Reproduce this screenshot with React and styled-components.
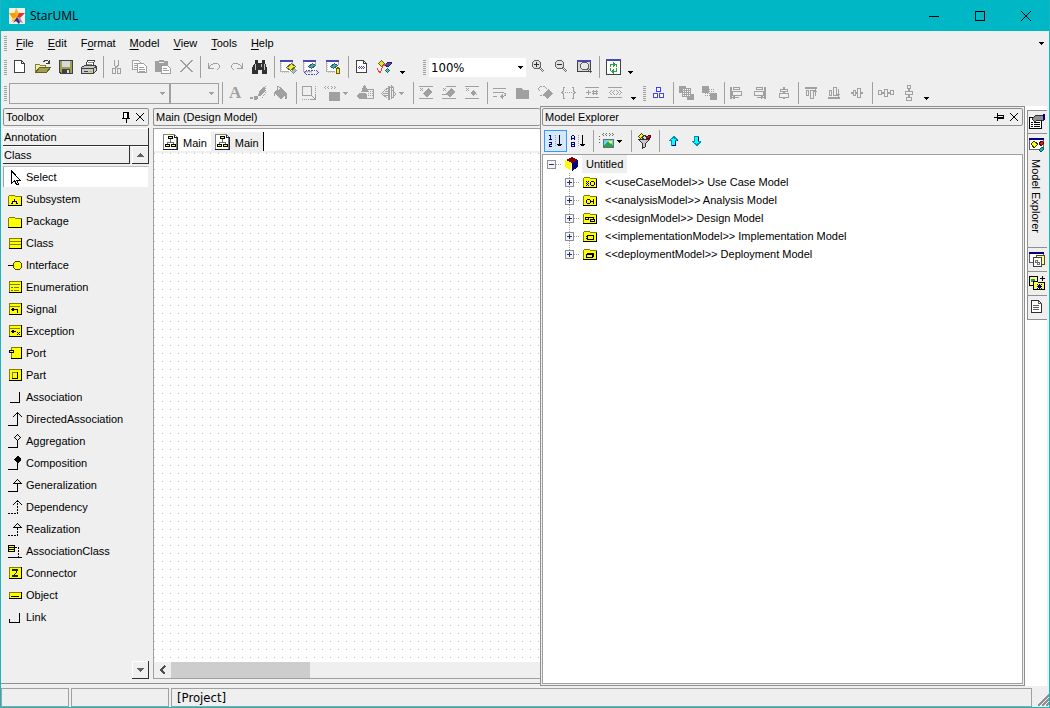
import React from 'react'
import styled, { createGlobalStyle, css } from 'styled-components'

const GREY = '#a0a0a0'
const DARK = '#404040'
const YELLOW = '#ffff00'
const NAVY = '#4848b0'

const GlobalStyle = createGlobalStyle`
  * { box-sizing: border-box; }
  body { margin: 0; }
  body, button, select {
    font-family: 'Liberation Sans', Arial, sans-serif;
    font-size: 11px;
    color: #000;
  }
  button {
    border: 0;
    padding: 0;
    background: none;
    text-align: left;
  }
  ul { list-style: none; margin: 0; padding: 0; }
`

/* ---------- icons: each entry is a list of [path, stroke, fill, dash] ---------- */

// single pixels, for thin diagonals
const dots = points => points.map(([x, y]) => `M${x} ${y}h1v1h-1z`).join('')

const folder = ['M.5 13V4.5l1-1h5l1 1H13V13z', '#808000', YELLOW]
const folderEdge = ['M0 13.5h13.5V5', '#000']
const windowBack = [
  ['M1 1h13v11H1z', null, '#fff'],
  ['M2 4v9M3 13h8', '#c8c8c8', null, '1 1'],
  ['M1 1.5h13M1 2.5h13', NAVY],
  ['M1.5 3v10M1 12.5h9M13.5 3v3', '#b0b0b0']
]
const box = [
  ['M1 1h12v11H1z', null, YELLOW],
  ['M1.5 12V1.5H13', '#808000'],
  ['M1 12.5h12.5V1', '#000']
]
const cornerLine = ['M0 13.5h9.5V1', '#000']
const dashedCorner = ['M0 13.5h9.5V1', '#000', null, '2 1']
const shortCorner = ['M0 13.5h9.5V6', '#000']
const openHead = [dots([[9, 0], [8, 1], [10, 1], [7, 2], [11, 2], [6, 3], [12, 3], [5, 4], [13, 4]]), null, '#000']
const closedHead = [
  ['M9 1h1l4 4H5z', null, '#efefef'],
  [dots([[9, 1], [8, 2], [10, 2], [7, 3], [11, 3], [6, 4], [12, 4]]), null, '#000'],
  ['M5 5.5h9', '#000']
]
const diamondPoints = [[9, 0], [8, 1], [10, 1], [7, 2], [11, 2], [6, 3], [12, 3], [7, 4], [11, 4], [8, 5], [10, 5], [9, 6]]

const icons = {
  newDoc: [['M3.5 1.5h7l3 3v9h-10z', DARK, '#fff'], ['M10.5 1.5v3h3', DARK]],
  open: [
    ['M1.5 12.5v-7h4l1 1h5v6z', '#808040', '#f0f0a0'],
    ['M1.5 13.5l4-5h11l-4 5z', '#606020', '#a0a050'],
    ['M9.5 3.5l1-2h3l2 3M15.5 1v3.5H12', DARK]
  ],
  save: [
    ['M2.5 1.5h13v13H4l-1.5-1.5z', DARK, '#a0a050'],
    ['M5 2h8v6H5z', null, '#d8d8d8'],
    ['M5 10h8v4H5z', null, DARK],
    ['M10 11h2v3h-2z', null, '#ddd']
  ],
  print: [
    ['M5.5 7.5l2-6h7l-2 6z', DARK, '#fff'],
    ['M8 3.5h5M7 5.5h5', '#909090'],
    ['M1.5 8.5l3-2h11l1 2v3l-3 3h-12z', DARK, '#c8c8c8'],
    ['M1.5 9.5h12v5M13.5 9.5l3-2', DARK],
    ['M4 12.5h4', DARK],
    ['M9 12.5h3', '#c0c000']
  ],
  cut: [['M6.5 1v5l2 3M10.5 1v5l-3 3M7.5 9l-3 1v4h3V9M9.5 9l3 1v4h-3V9', GREY]],
  copy: [
    ['M1.5 1.5h6l2 2v7h-8z', GREY, '#fff'],
    ['M3 4.5h4M3 6.5h4M3 8.5h4', GREY],
    ['M6.5 4.5h6l3 3v6h-9z', GREY, '#fff'],
    ['M8 8.5h5M8 10.5h6M8 12.5h6', GREY]
  ],
  paste: [
    ['M1 2h4V1h5v1h4v11H1z', null, GREY],
    ['M5 3.5h5', '#f0f0f0'],
    ['M7.5 6.5h6l3 3v5h-9z', GREY, '#fff'],
    ['M9 9.5h4M9 11.5h6', GREY]
  ],
  remove: [['M3 1l12 12M4 1l12 12M15 1L3 13M16 1L4 13', GREY]],
  undo: [['M3.5 4v5.5H9M3.5 9.5l2-3 3-2h4l2 2v2l-3 3', GREY]],
  redo: [['M14.5 4v5.5H9M14.5 9.5l-2-3-3-2h-4l-2 2v2l3 3', GREY]],
  find: [
    ['M4 1h3v3h4V1h3v3l2 5v6h-5v-4H7v4H1V9l3-5z', null, '#303030'],
    ['M4.5 5v6M10.5 5v3M13.5 5v6', '#c0c0c0']
  ],
  diagramEdit: [
    ...windowBack,
    ['M7.5 8.5l5-4 4 3-5 4z', '#606020', '#e8e840'],
    ['M12.5 12.5l3-3 2 2-3 3z', '#909090', '#90d0b0']
  ],
  diagramLink: [
    ...windowBack,
    ['M6.5 7.5l4-3 3 2-4 3z', '#306060', '#40b0b0'],
    [dots([[4, 11], [3, 12], [2, 13], [3, 14], [4, 15], [14, 11], [15, 12], [16, 13], [15, 14], [14, 15]]), null, NAVY],
    ['M6 11.5h7M6 15.5h7', NAVY, null, '2 1']
  ],
  diagramTag: [
    ...windowBack,
    ['M5.5 7.5l4-3 3 2-4 3z', '#306060', '#40b0b0'],
    ['M11.5 14.5v-4l1-2h1l1 2v4z', '#606000', '#f0f040']
  ],
  codeDoc: [
    ['M3.5 1.5h7l3 3v9h-10z', DARK, '#fff'],
    ['M10.5 1.5v3h3', DARK],
    [dots([[5, 8], [6, 7], [6, 9], [7, 8], [8, 7], [8, 9], [9, 8], [10, 7], [10, 9], [11, 8]]), null, NAVY]
  ],
  verify: [
    ['M2.5 4.5l3-3 3 3-3 3z', '#606020', '#e8e020'],
    ['M9 6l3-3h3v2l-3 3z', '#202060', '#4848d0'],
    ['M9.5 11.5l2-2 2 2-2 2z', '#206060', '#40c0c0'],
    ['M1 9l3 5 3-7 3-2', '#f04040']
  ],
  zoomIn: [
    ['M4.5 1.5h4l2 2v4l-2 2h-4l-2-2v-4z', '#606060', '#e0e0e0'],
    ['M4 5.5h5M6.5 3v5', '#303030'],
    ['M9.5 9.5l4 4M10.5 8.5l4 4', '#707070']
  ],
  zoomOut: [
    ['M4.5 1.5h4l2 2v4l-2 2h-4l-2-2v-4z', '#606060', '#e0e0e0'],
    ['M4 5.5h5', '#303030'],
    ['M9.5 9.5l4 4M10.5 8.5l4 4', '#707070']
  ],
  zoomFit: [
    ['M1.5 2.5h13v10h-13z', DARK, '#d8d8d8'],
    ['M1 1.5h14M1 2.5h14', NAVY],
    ['M6.5 3.5h4l2 2v3l-2 2h-4l-2-2v-3z', '#606060', '#e8e8e8'],
    ['M11 10l4 4M12 9l4 4', '#606060']
  ],
  refresh: [
    ['M2.5 1.5h14v14h-14z', DARK, '#fff'],
    ['M2 .5h15M2 1.5h15', NAVY],
    ['M6.5 8V5.5H10M9 3.5l2 2-2 2M12.5 9v3.5H9M10 10.5l-2 2 2 2', '#30a040'],
    ['M12.5 5v3M6.5 9v3', '#30a040']
  ],
  brush: [
    ['M13 2h2v4l-4 5H8l1-4z', null, GREY],
    ['M0 12h3v2H0zM4 11h4v2l-2 2H4z', null, GREY],
    ['M15.5 1v7l-4 6', GREY, null, '1 1']
  ],
  fill: [['M1 8l7-5 6 5-6 6z', null, GREY], ['M1.5 11V8l3-3V1.5l3 1V8', GREY], ['M14 8v6h-2V9z', null, GREY]],
  resize: [
    ['M1.5 1.5h9v9h-9z', GREY],
    ['M14.5 1v13M1 14.5h13', GREY, null, '1 1'],
    ['M10 10l4 4M14.5 10v4.5H10', GREY]
  ],
  stereotype: [
    [dots([[1, 1], [0, 2], [1, 3], [4, 1], [3, 2], [4, 3], [7, 1], [8, 2], [7, 3], [10, 1], [11, 2], [10, 3]]), null, GREY],
    ['M5 7h11v9H5z', null, GREY]
  ],
  shapes: [
    ['M7 0h1l4 7H4z', null, GREY],
    ['M0 10l2-2h6l2 2v2l-2 2H2l-2-2z', null, GREY],
    ['M10 4.5h6.5V13H9', GREY],
    ['M11 6.5h5M11 8.5h5M11 10.5h5', GREY, null, '1 1']
  ],
  flip: [
    ['M7.5 3L1.5 8.5l6 5', GREY],
    ['M3 8.5h5M5 6.5h3M5 10.5h3', GREY],
    ['M8 1h2v14H8z', null, GREY],
    ['M10 2.5h3v10M11 4l5 5-5 5z', GREY],
    ['M11 0l2 2-2 3z', null, GREY]
  ],
  hideAttr: [
    ['M1 1.5h14M1 13.5h14', GREY],
    [dots([[2, 3], [4, 3], [3, 4], [2, 5], [4, 5]]), null, GREY],
    ['M10 3l4 4-5 5-4-3z', null, GREY]
  ],
  hideOps: [
    ['M5 1.5h10M1 9.5h6M1 13.5h14', GREY],
    [dots([[2, 3], [4, 3], [3, 4], [2, 5], [4, 5]]), null, GREY],
    ['M10 3l4 4-5 5-4-3z', null, GREY]
  ],
  hideLits: [
    ['M1 1.5h14M1 13.5h14', GREY],
    [dots([[2, 3], [4, 3], [3, 4], [2, 5], [4, 5]]), null, GREY],
    ['M9 5l3 3-3 3-3-3z', null, GREY],
    ['M12 9h1v1h-1z', null, GREY]
  ],
  wrap: [['M1 3.5h13M1 7.5h10l2 1v2l-2 1H9M1 11.5h4M11 9.5l-2 2 2 2', GREY]],
  solidFolder: [['M1 3h6l1 2h6v9H1z', null, GREY]],
  stereoNs: [
    [dots([[1, 2], [0, 3], [0, 4], [1, 5], [7, 2], [8, 3]]), null, GREY],
    ['M2 1.5h6M2 10.5h4', GREY, null, '2 1'],
    ['M10 4l5 4-6 6-4-4z', null, GREY]
  ],
  braces: [['M4 2H2.5v4L1 7.5 2.5 9v4H4M11 2h1.5v4L14 7.5 12.5 9v4H11', GREY], ['M4 7.5h8', GREY, null, '1 1']],
  plusHash: [['M1 2.5h14M1 12.5h14M2 7.5h5M4.5 5v5M8 6.5h6M8 8.5h6M9.5 5v5M12.5 5v5', GREY]],
  guillemets: [
    ['M1 2.5h14M1 12.5h14', GREY],
    [dots([[4, 5], [3, 6], [2, 7], [3, 8], [4, 9], [7, 5], [6, 6], [5, 7], [6, 8], [7, 9], [9, 5], [10, 6], [11, 7], [10, 8], [9, 9], [12, 5], [13, 6], [14, 7], [13, 8], [12, 9]]), null, GREY]
  ],
  layout: [['M6.5 2.5h4v4h-4zM3.5 8.5h4v4h-4zM9.5 8.5h4v4h-4z', '#4040ff', '#fff']],
  toFront: [['M1 1h7v7H1zM9 9h7v6H9z', null, GREY], ['M4 3h9v9H4z', null, GREY], ['M5 4.5h7M5 6.5h7M5 8.5h7M5 10.5h7', '#fff', null, '1 1']],
  toBack: [['M1 1h7v7H1zM9 8h7v7H9z', null, GREY], ['M4 4.5h9M4 6.5h9M4 8.5h9M4 10.5h9', GREY, null, '1 1']],
  alignLeft: [['M1 2h2v12H1z', null, GREY], ['M4.5 2.5h6v2h-6zM3.5 6.5h9v4h-9zM4 12.5h6M6 11l-2 1.5L6 14', GREY]],
  alignRight: [['M12 2h2v12h-2z', null, GREY], ['M4.5 2.5h6v2h-6zM2.5 6.5h9v4h-9zM5 12.5h6M9 11l2 1.5L9 14', GREY]],
  alignCenter: [['M8 2h2v12H8z', null, GREY], ['M5.5 4.5h7v2h-7zM4.5 8.5h9v4h-9z', GREY, '#f0f0f0']],
  alignTop: [['M2 2h12v2H2z', null, GREY], ['M3.5 5.5h2v5h-2zM7.5 5.5h3v8h-3zM12.5 5v6M11 7l1.5-2L14 7', GREY]],
  alignBottom: [['M2 12h12v2H2z', null, GREY], ['M3.5 5.5h2v5h-2zM7.5 2.5h3v8h-3zM12.5 4v7M11 9l1.5 2L14 9', GREY]],
  alignMiddle: [['M2 7h12v2H2z', null, GREY], ['M4.5 5.5h2v5h-2zM8.5 3.5h3v9h-3z', GREY, '#f0f0f0']],
  spaceH: [['M1 7h16v2H1z', null, GREY], ['M1.5 5.5h3v4h-3zM7.5 4.5h3v7h-3zM13.5 5.5h3v4h-3z', GREY, '#f0f0f0']],
  spaceV: [['M8 0h2v16H8z', null, GREY], ['M7.5 .5h3v3h-3zM5.5 6.5h7v3h-7zM6.5 12.5h5v3h-5z', GREY, '#f0f0f0']],

  select: [['M3.5 1v12.5l3-3 2 4h2l-1.5-4h3.5z', '#000', '#fff']],
  subsystem: [folder, folderEdge, ['M6.5 7v2M4.5 11.5V9.5h4v2M3 11.5h2M8 11.5h2', '#000']],
  package: [folder, folderEdge],
  class: [['M1 2h12v10H1z', null, YELLOW], ['M1.5 12V2.5H13M2 5.5h11M2 8.5h11', '#808000'], ['M1 12.5h12.5V2', '#000']],
  interface: [['M0 7.5h5', '#000'], ['M7.5 3.5h4l2 2v4l-2 2h-4l-2-2v-4z', '#404000', YELLOW]],
  enumeration: [...box, ['M2 4.5h10', '#808000'], ['M3 7h2v1H3zM3 10h2v1H3z', null, '#008080'], ['M6 7.5h5M6 10.5h5', '#808000']],
  signal: [...box, ['M2 4.5h10', '#808000'], ['M3 7.5h6v3M5.5 6L4 7.5 5.5 9', '#000']],
  exception: [...box, ['M2 4.5h10', '#808000'], ['M3 7.5h5M5.5 6L4 7.5 5.5 9', '#000'], [dots([[9, 8], [11, 8], [10, 9], [9, 10], [11, 10]]), null, '#000']],
  port: [['M3 1h10v11H3z', null, YELLOW], ['M3.5 12V1.5H13', '#808000'], ['M3 12.5h10.5V1', '#000'], ['M1.5 4.5h4v2h-4z', '#000', YELLOW]],
  part: [...box, ['M4.5 10V4.5H10', '#808000'], ['M4 10.5h5.5V4', '#000']],
  association: [['M2 12.5h9.5V2', '#000']],
  directed: [cornerLine, openHead],
  aggregation: [shortCorner, [dots(diamondPoints), null, '#000']],
  composition: [shortCorner, ['M9 0h1l3 3v1l-3 3H9L6 4V3z', null, '#000']],
  generalization: [cornerLine, ...closedHead],
  dependency: [dashedCorner, openHead],
  realization: [dashedCorner, ...closedHead],
  associationClass: [['M0 1h6v6H0z', null, YELLOW], ['M.5 1.5h6v6h-6zM1 3.5h5M1 5.5h5', '#000'], ['M7 3.5h3.5V13', '#000', null, '2 1'], ['M0 13.5h14', '#000']],
  connector: [...box, ['M4.5 3.5h5v1h-5zM4.5 9.5h5v1h-5z', '#202000'], [dots([[8, 5], [8, 6], [7, 7], [6, 8]]), null, '#202000']],
  object: [['M1 4h12v6H1z', null, YELLOW], ['M1.5 10V4.5H13', '#808000'], ['M1 10.5h12.5V4M3 8.5h8', '#000']],
  link: [['M1.5 9v3.5h10V3', '#000']],

  diagram: [
    ['M1.5 .5h11l2 2v13h-13z', '#808080', '#fff'],
    ['M12.5 .5v3h3v12H1', '#202020'],
    ['M6.5 2.5h4v2h-4zM3.5 10.5h4v2h-4zM9.5 10.5h4v2h-4z', '#000', YELLOW],
    ['M8.5 5v3M5.5 10V8.5h6V10', '#707070']
  ],
  sortOrder: [
    ['M2 2.5h2M3.5 2v5M2 6.5h3M2 9.5h2.5v2H2.5v2H5', '#000080'],
    ['M8.5 2v12', GREY, null, '1 1'],
    ['M12.5 2v11M10 11.5h5M11 12.5h3', '#000']
  ],
  sortName: [
    ['M1.5 7V3.5l1-1h1l1 1V7M2 5.5h3M1.5 9.5h3v4h-3zM2 11.5h3', '#000080'],
    ['M8.5 2v12', GREY, null, '1 1'],
    ['M12.5 2v11M10 11.5h5M11 12.5h3', '#000']
  ],
  viewStereo: [
    ['M1.5 3v8', '#606060', null, '1 2'],
    [dots([[5, 0], [4, 1], [5, 2], [8, 0], [7, 1], [8, 2], [11, 0], [12, 1], [11, 2], [14, 0], [15, 1], [14, 2]]), null, '#707070'],
    ['M5.5 6.5h10v8h-10z', '#607080', '#60d8e8'],
    ['M6 12l4-3 5 3v2H6z', null, '#30a050'],
    ['M11 8h3v2h-3z', null, YELLOW]
  ],
  filter: [
    ['M2.5 3.5l3-3 2 2-3 3z', '#404000', YELLOW],
    ['M10 5l3-3 2 1-2 3z', '#600000', '#d02020'],
    ['M2.5 6.5h11l-4 4v3l-3 2v-5z', '#303030', '#c8c8c8'],
    ['M6 5l3-3 2 3-2 2z', '#303030', '#ddd']
  ],
  up: [
    ['M9 3h1l4 4v1h-2v5H7V8H5V7z', null, '#0090b0'],
    ['M9 5h1v1h2v1h-1v5H8V7H7V6h2z', null, '#00ffff'],
    ['M11.5 8v5M8 12.5h4M13.5 7v1', '#000080']
  ],
  down: [
    ['M7 3h5v5h2v1l-4 4H9L5 9V8h2z', null, '#0090b0'],
    ['M8 4h3v5h1v1h-2v1H9v-1H7V9h1z', null, '#00ffff'],
    ['M11.5 4v4', '#000080']
  ],
  cube: [
    ['M7 1l6 3-6 3-6-3z', null, '#800000'],
    ['M0 4l7 3v8l-7-4z', null, YELLOW],
    ['M13 4L7 7v8l6-4z', null, '#000080'],
    ['M6.5 8v7', '#fff']
  ],
  useCase: [folder, folderEdge, [dots([[3, 7], [5, 7], [4, 8], [3, 9], [5, 9], [4, 10], [3, 11], [5, 11]]), null, '#000'], ['M7.5 8.5l1-1h2l1 1v2l-1 1h-2l-1-1z', '#000']],
  analysis: [folder, folderEdge, ['M3.5 8.5l1-1h2l1 1v2l-1 1h-2l-1-1zM7.5 9.5h3M10.5 7v5', '#000']],
  design: [folder, folderEdge, ['M2.5 7.5h3v2h-3zM7.5 9.5h4v2h-4zM6 7.5h4V9', '#000']],
  implementation: [folder, folderEdge, ['M4.5 7.5h6v4h-6zM3 8.5h2M3 10.5h2', '#000']],
  deployment: [folder, folderEdge, ['M3.5 8.5h6v3h-6zM4 7.5h6.5V11', '#000']],

  properties: [
    ['M.5 3.5h12v11h-12z', '#000', '#fff'],
    ['M5 8.5h6M5 10.5h6M5 12.5h6M2 8.5h2M2 10.5h2M2 12.5h2', '#000'],
    ['M3 5l4-4h7v5H8L6 8z', '#303030', '#909090'],
    ['M14 0h2v6h-2z', null, '#000080']
  ],
  explorer: [
    ['M.5 1.5h14v11h-14z', '#606060', '#fff'],
    ['M0 1h15v2H0z', null, '#000080'],
    ['M2 7l3-3 4 3-4 4z', '#303000', YELLOW],
    ['M10 6l3-2 2 2-3 3z', '#600000', '#d02020'],
    ['M10 13l3-3 2 2-3 3z', '#006060', '#20b0b0']
  ],
  attachments: [
    ['M.5 1.5h14v10h-14z', '#606060', '#fff'],
    ['M0 1h15v2H0z', null, '#000080'],
    ['M7.5 4.5h8v9h-8z', '#505020', '#ffffa0'],
    ['M4.5 6.5h8v9h-8z', '#404040', '#fff'],
    ['M6.5 9.5h2v2h-2zM8.5 11.5h2v2h-2z', '#707070']
  ],
  profile: [
    ['M.5 1.5h8v9h-8z', '#000', '#ffff80'],
    ['M2 4h4v3H2z', null, '#2090a0'],
    ['M11 3.5h5M13.5 1v5', '#000'],
    ['M4.5 6.5h4l1 1h6v7h-11z', '#000', '#ffff40'],
    [dots([[8, 9], [12, 9], [9, 10], [11, 10], [9, 12], [11, 12], [8, 13], [12, 13]]), null, '#000080'],
    ['M8 11.5h5M10.5 9v5', '#000080']
  ],
  document: [['M2.5 1.5h7l3 3v9h-10z', '#303030', '#fff'], ['M9.5 1.5v3h3M4 6.5h6M4 8.5h6M4 10.5h6', '#606060']],

  pin: [['M4.5 2.5h5v6h-5zM3 8.5h8M7.5 9v4M8.5 3v5', '#000', '#fff']],
  pinSide: [['M4.5 5.5h6v3h-6zM4.5 3v8M1 7.5h4M5 7.5h6', '#000']],
  close: [['M3 3l8 8M11 3l-8 8', '#000']]
}

const Svg = styled.svg`
  flex: none;
  display: block;
  overflow: visible;
  shape-rendering: crispEdges;
`

function Icon ({ name, size = 16 }) {
  return (
    <Svg width={size} height={size} viewBox={`0 0 ${size} ${size}`} aria-hidden='true'>
      {icons[name].map(([d, stroke, fill, dash], i) => (
        <path key={i} d={d} stroke={stroke || 'none'} fill={fill || 'none'} strokeDasharray={dash} />
      ))}
    </Svg>
  )
}

function Triangle ({ color = '#000', up }) {
  return (
    <Svg width='7' height='4' viewBox='0 0 7 4' aria-hidden='true'>
      <path d={up ? 'M0 4h7L3.5 0z' : 'M0 0h7L3.5 4z'} fill={color} />
    </Svg>
  )
}

function Caret ({ color = '#000' }) {
  return (
    <Svg width='5' height='3' viewBox='0 0 5 3' aria-hidden='true'>
      <path d='M0 0h5v1H4v1H3v1H2V2H1V1H0z' fill={color} />
    </Svg>
  )
}

/* ---------- window frame ---------- */

const Window = styled.div`
  display: flex;
  flex-direction: column;
  height: 100vh;
  overflow: hidden;
  background: #efefef;
  border: 1px solid #18b4c0;
  border-top: 0;
  line-height: 14px;
  cursor: default;
`

const TitleBar = styled.header`
  flex: none;
  display: flex;
  align-items: center;
  height: 31px;
  padding-left: 8px;
  background: #00b7c6;
`

const AppName = styled.h1`
  flex: 1;
  margin: 0 0 0 5px;
  font: 12px/16px 'Open Sans', 'Noto Sans', sans-serif;
`

const CaptionButton = styled.button`
  display: flex;
  align-items: center;
  justify-content: center;
  width: 46px;
  height: 30px;
`

const MenuBar = styled.nav`
  flex: none;
  display: flex;
  align-items: center;
  height: 23px;
  padding: 1px 5px 0 0;
`

const MenuButton = styled.button`
  height: 20px;
  padding: 0 7px;
  u { text-underline-offset: 2px; }
`

const MenuSpace = styled.div`
  flex: 1;
`

const Grip = styled.span`
  flex: none;
  width: 3px;
  height: 15px;
  margin: 0 1px 0 ${p => p.$gap || 3}px;
  background: repeating-linear-gradient(#a0a0a0 0 1px, transparent 1px 2px);
  & + ${MenuButton} { margin-left: 1px; }
`

const ToolRow = styled.div`
  flex: none;
  display: flex;
  align-items: center;
  height: 26px;
`

const ToolButton = styled.button`
  flex: none;
  display: flex;
  align-items: center;
  width: ${p => (p.$menu ? 33 : 23)}px;
  height: 22px;
  padding-left: 3px;
  svg + svg { margin-left: 3px; }
  ${p => p.$pressed && css`
    background: #d4e8fa;
    outline: 1px solid #3399ff;
    outline-offset: -1px;
  `}
`

const More = styled.button`
  flex: none;
  display: flex;
  align-items: flex-end;
  justify-content: center;
  width: 12px;
  height: 22px;
  padding-bottom: 4px;
`

const Separator = styled.span`
  flex: none;
  width: 1px;
  height: 22px;
  margin: 0 1px 0 3px;
  background: #a0a0a0;
`

const ComboBox = styled.label`
  flex: none;
  position: relative;
  width: ${p => p.$width}px;
  height: ${p => (p.$flat ? 19 : 21)}px;
  margin-right: ${p => (p.$flat ? 1 : 0)}px;
  border: ${p => (p.$flat ? 0 : '1px solid #a0a0a0')};
  background: ${p => (p.$flat ? '#fff' : 'none')};
  ${Grip} + & { margin-left: ${p => (p.$flat ? 2 : 1)}px; }
  svg {
    position: absolute;
    right: ${p => (p.$flat ? 3 : 4)}px;
    top: 8px;
    pointer-events: none;
  }
`

const Select = styled.select`
  appearance: none;
  width: 100%;
  height: 100%;
  border: 0;
  padding: 0 2px;
  background: none;
  font: 13px 'DejaVu Sans Condensed', 'DejaVu Sans', sans-serif;
`

/* ---------- work area ---------- */

const Body = styled.div`
  flex: 1;
  display: flex;
  min-height: 0;
`

const Left = styled.div`
  flex: 1;
  min-width: 0;
  display: flex;
  gap: 4px;
  padding: 2px 0 4px 2px;
  margin: 0 0 4px 0;
  border-bottom: 1px solid #8f8f8f;
`

const PaneHeader = styled.h2`
  flex: none;
  display: flex;
  align-items: center;
  height: 18px;
  margin: 0 0 2px;
  padding: 0 1px 0 2px;
  border: 1px solid #8f8f8f;
  border-right-width: ${p => (p.$open ? 0 : 1)}px;
  border-radius: 2px;
  font-size: 11px;
  font-weight: normal;
  span { flex: 1; }
`

const ToolboxPane = styled.aside`
  flex: none;
  display: flex;
  flex-direction: column;
  width: 146px;
`

const Category = styled.button`
  flex: 1;
  height: 18px;
  padding: 1px 0 0 1px;
  border: solid #303030;
  border-width: 0 1px 1px 0;
  box-shadow: inset 1px 1px #fff;
`

const Categories = styled.div`
  margin-bottom: 2px;
`

const CategoryRow = styled.div`
  display: flex;
  gap: 2px;
`

const Stepper = styled.button`
  flex: none;
  display: flex;
  align-items: center;
  justify-content: center;
  align-self: flex-end;
  width: 17px;
  height: 18px;
  border: solid #303030;
  border-width: 0 1px 1px 0;
  box-shadow: inset 1px 1px #fff;
`

const Tools = styled.ul`
  flex: 1;
`

const Tool = styled.button`
  display: flex;
  align-items: center;
  gap: 3px;
  width: 100%;
  height: 22px;
  padding-left: 5px;
  ${p => p.$active && css`
    background: #fff linear-gradient(#a0a0a0, #a0a0a0) left / 1px 100% no-repeat;
    border: solid #efefef;
    border-width: 1px 1px 1px 0;
    border-top-color: #c0c0c0;
  `}
`

const MainPane = styled.main`
  flex: 1;
  min-width: 0;
  display: flex;
  flex-direction: column;
`

const DiagramArea = styled.section`
  flex: 1;
  display: flex;
  flex-direction: column;
  min-height: 0;
  border: solid #a0a0a0;
  border-width: 1px 0 1px 1px;
  background: #fff;
`

const Tabs = styled.div`
  display: flex;
  height: 24px;
  padding-top: 3px;
  border-bottom: 2px solid #efefef;
`

const Tab = styled.button`
  display: flex;
  align-items: center;
  gap: 5px;
  padding: 0 4px 0 ${p => (p.$active ? 8 : 3)}px;
  background: ${p => (p.$active ? '#fff' : '#efefef')};
  border-right: ${p => (p.$active ? 0 : '1px solid #000')};
  span { padding-top: 3px; }
`

// grid points: white everywhere except the first pixel of each 8px cell
const Canvas = styled.div`
  flex: 1;
  background:
    linear-gradient(90deg, transparent 1px, #fff 1px) 0 0 / 8px 8px,
    linear-gradient(transparent 1px, #fff 1px) 0 0 / 8px 8px,
    #c0c0c0;
`

const ScrollBar = styled.div`
  flex: none;
  display: flex;
  height: 16px;
  background: #efefef;
`

const ScrollButton = styled.button`
  display: flex;
  align-items: center;
  justify-content: center;
  width: 17px;
`

const Thumb = styled.div`
  width: 139px;
  background: #cdcdcd;
`

const ExplorerPane = styled.section`
  flex: none;
  display: flex;
  flex-direction: column;
  width: 485px;
  margin-bottom: 2px;
  padding: 1px;
  border: 1px solid #8f8f8f;
`

const ExplorerTools = styled.div`
  display: flex;
  align-items: center;
  height: 26px;
  padding: 0 2px;
`

const Tree = styled.ul`
  flex: 1;
  padding: 0 3px;
  background: #fff;
  border: 1px solid #a0a0a0;
`

const Node = styled.li`
  display: flex;
  align-items: center;
  height: 18px;
  padding-left: ${p => p.$level * 18}px;
  svg + svg { margin-left: 1px; }
`

const NodeLabel = styled.span`
  margin-left: ${p => (p.$selected ? 1 : 2)}px;
  padding: 2px 4px;
  background: ${p => (p.$selected ? '#efefef' : 'none')};
  white-space: nowrap;
`

const Dock = styled.nav`
  flex: none;
  display: flex;
  flex-direction: column;
  width: 22px;
  margin: 0 2px 2px 0;
  padding: 4px 0 0 2px;
  background: #fff;
`

const DockButton = styled.button`
  display: flex;
  flex-direction: column;
  align-items: flex-start;
  height: ${p => p.$height}px;
  padding: 3px 0 0 1px;
  background: #efefef;
  border: solid #8f8f8f;
  border-width: 1px 0 0 1px;
  &:last-child { border-bottom-width: 1px; }
  span {
    writing-mode: vertical-rl;
    margin-top: 6px;
    line-height: 14px;
  }
`

const StatusBar = styled.footer`
  flex: none;
  display: flex;
  gap: 2px;
  height: 19px;
`

const StatusCell = styled.div`
  flex: ${p => (p.$width ? 'none' : 1)};
  width: ${p => (p.$width ? p.$width + 'px' : 'auto')};
  padding-left: 5px;
  border: 1px solid #a0a0a0;
  font: 13px/17px 'DejaVu Sans Condensed', 'DejaVu Sans', sans-serif;
`

const menus = [['', 'F', 'ile'], ['', 'E', 'dit'], ['F', 'o', 'rmat'], ['', 'M', 'odel'], ['', 'V', 'iew'], ['', 'T', 'ools'], ['', 'H', 'elp']]

const tools = [
  ['select', 'Select'],
  ['subsystem', 'Subsystem'],
  ['package', 'Package'],
  ['class', 'Class'],
  ['interface', 'Interface'],
  ['enumeration', 'Enumeration'],
  ['signal', 'Signal'],
  ['exception', 'Exception'],
  ['port', 'Port'],
  ['part', 'Part'],
  ['association', 'Association'],
  ['directed', 'DirectedAssociation'],
  ['aggregation', 'Aggregation'],
  ['composition', 'Composition'],
  ['generalization', 'Generalization'],
  ['dependency', 'Dependency'],
  ['realization', 'Realization'],
  ['associationClass', 'AssociationClass'],
  ['connector', 'Connector'],
  ['object', 'Object'],
  ['link', 'Link']
]

const models = [
  ['useCase', '<<useCaseModel>> Use Case Model'],
  ['analysis', '<<analysisModel>> Analysis Model'],
  ['design', '<<designModel>> Design Model'],
  ['implementation', '<<implementationModel>> Implementation Model'],
  ['deployment', '<<deploymentModel>> Deployment Model']
]

// "|" is a separator, a trailing "*" marks a button with a drop-down arrow
const standard = 'newDoc open save print | cut copy paste remove | undo redo find | diagramEdit diagramLink diagramTag | codeDoc verify'
const formatRest = 'brush fill | resize stereotype* shapes flip* | hideAttr hideOps hideLits | wrap solidFolder stereoNs braces plusHash guillemets'
const alignment = 'layout | toFront toBack | alignLeft alignRight alignCenter | alignTop alignBottom alignMiddle | spaceH spaceV'

function ToolButtons ({ names, caret = GREY }) {
  return names.split(' ').map((item, i) => {
    if (item === '|') return <Separator key={i} />
    const name = item.replace('*', '')
    const menu = name !== item
    return (
      <ToolButton key={i} $menu={menu} aria-label={name}>
        <Icon name={name} />
        {menu && <Caret color={caret} />}
      </ToolButton>
    )
  })
}

function MoreButton () {
  return <More aria-label='More buttons'><Caret /></More>
}

function Logo () {
  return (
    <svg width='16' height='16' viewBox='0 0 16 16' aria-hidden='true'>
      <path d='M0 0h16v16H0z' fill='#f4f0ec' />
      <path d='M7 0l3 5.5L8 9 5 6z' fill='#f8b820' />
      <path d='M0 5h6l2 4-4 2z' fill='#f0a000' />
      <path d='M2 14l2-4 4-1v3z' fill='#f8c840' />
      <path d='M10 5h6l-5 5-3-1z' fill='#e83028' />
      <path d='M8 9l3 1 3 5-3-1z' fill='#b080a0' />
      <path d='M8 9l3 5-1 2-3-3-3 2z' fill='#302880' />
    </svg>
  )
}

function Expander ({ open, last }) {
  return (
    <Svg width='18' height='18' viewBox='0 0 18 18' aria-hidden='true'>
      {!open && <path d={last ? 'M5.5 0v9' : 'M5.5 0v18'} stroke='#a0a0a0' strokeDasharray='1 1' />}
      <path d='M10 9.5h5' stroke='#a0a0a0' strokeDasharray='1 1' />
      <path d='M1.5 5.5h8v8h-8z' fill='#f4f4f4' stroke='#909090' />
      <path d={open ? 'M3 9.5h5' : 'M3 9.5h5M5.5 7v5'} stroke='#203080' />
    </Svg>
  )
}

function Toolbox () {
  return (
    <ToolboxPane>
      <PaneHeader><span>Toolbox</span><Icon name='pin' size={14} /><Icon name='close' size={14} /></PaneHeader>
      <Categories>
        <CategoryRow><Category>Annotation</Category></CategoryRow>
        <CategoryRow>
          <Category>Class</Category>
          <Stepper aria-label='Scroll up'><Triangle up color='#606060' /></Stepper>
        </CategoryRow>
      </Categories>
      <Tools>
        {tools.map(([icon, label], i) => (
          <li key={label}><Tool $active={i === 0}><Icon name={icon} size={15} />{label}</Tool></li>
        ))}
      </Tools>
      <Stepper aria-label='Scroll down'><Triangle color='#606060' /></Stepper>
    </ToolboxPane>
  )
}

function Diagram () {
  return (
    <MainPane>
      <PaneHeader $open><span>Main (Design Model)</span></PaneHeader>
      <DiagramArea>
        <Tabs>
          <Tab $active><Icon name='diagram' /><span>Main</span></Tab>
          <Tab><Icon name='diagram' /><span>Main</span></Tab>
        </Tabs>
        <Canvas />
        <ScrollBar>
          <ScrollButton aria-label='Scroll left'>
            <Svg width='6' height='8' viewBox='0 0 6 8'><path d='M5 0L1 4l4 4' fill='none' stroke='#505050' strokeWidth='2' /></Svg>
          </ScrollButton>
          <Thumb />
        </ScrollBar>
      </DiagramArea>
    </MainPane>
  )
}

function ModelExplorer () {
  return (
    <ExplorerPane>
      <PaneHeader><span>Model Explorer</span><Icon name='pinSide' size={14} /><Icon name='close' size={14} /></PaneHeader>
      <ExplorerTools>
        <ToolButton $pressed aria-label='Sort by order'><Icon name='sortOrder' /></ToolButton>
        <ToolButtons names='sortName | viewStereo* | filter | up down' caret='#000' />
      </ExplorerTools>
      <Tree>
        <Node $level={0}>
          <Expander open />
          <Icon name='cube' />
          <NodeLabel $selected>Untitled</NodeLabel>
        </Node>
        {models.map(([icon, label], i) => (
          <Node key={icon} $level={1}>
            <Expander last={i === models.length - 1} />
            <Icon name={icon} />
            <NodeLabel>{label}</NodeLabel>
          </Node>
        ))}
      </Tree>
    </ExplorerPane>
  )
}

function SideDock () {
  return (
    <Dock>
      <DockButton $height={23} aria-label='Properties'><Icon name='properties' /></DockButton>
      <DockButton $height={114}><Icon name='explorer' /><span>Model Explorer</span></DockButton>
      <DockButton $height={24} aria-label='Attachments'><Icon name='attachments' /></DockButton>
      <DockButton $height={24} aria-label='Profiles'><Icon name='profile' /></DockButton>
      <DockButton $height={25} aria-label='Documentation'><Icon name='document' /></DockButton>
    </Dock>
  )
}

export default function App () {
  return (
    <Window>
      <GlobalStyle />
      <TitleBar>
        <Logo />
        <AppName>StarUML</AppName>
        <CaptionButton aria-label='Minimize'><Svg width='10' height='10'><path d='M0 5.5h10' stroke='#000' /></Svg></CaptionButton>
        <CaptionButton aria-label='Maximize'><Svg width='10' height='10'><path d='M.5 .5h9v9h-9z' stroke='#000' fill='none' /></Svg></CaptionButton>
        <CaptionButton aria-label='Close'><Svg width='10' height='10'><path d='M0 0l10 10M10 0L0 10' stroke='#000' /></Svg></CaptionButton>
      </TitleBar>
      <MenuBar>
        <Grip />
        {menus.map(([a, key, b]) => <MenuButton key={key}>{a}<u>{key}</u>{b}</MenuButton>)}
        <MenuSpace />
        <Caret />
      </MenuBar>
      <ToolRow>
        <Grip />
        <ToolButtons names={standard} />
        <MoreButton />
        <Grip $gap={15} />
        <ComboBox $width={97} $flat>
          <Select aria-label='Zoom' defaultValue='100%'><option>100%</option></Select>
          <Caret />
        </ComboBox>
        <ToolButtons names='zoomIn zoomOut zoomFit | refresh' />
        <MoreButton />
      </ToolRow>
      <ToolRow>
        <Grip />
        <ComboBox $width={161}><Select aria-label='Font' disabled /><Caret color={GREY} /></ComboBox>
        <ComboBox $width={49}><Select aria-label='Font size' disabled /><Caret color={GREY} /></ComboBox>
        <Separator />
        <ToolButton aria-label='Font color'>
          <Svg width='16' height='16' viewBox='0 0 16 16'>
            <text x='2' y='13' fill={GREY} fontFamily='Liberation Serif, serif' fontWeight='bold' fontSize='17'>A</text>
          </Svg>
        </ToolButton>
        <ToolButtons names={formatRest} />
        <MoreButton />
        <Grip $gap={4} />
        <ToolButtons names={alignment} />
        <MoreButton />
      </ToolRow>
      <Body>
        <Left>
          <Toolbox />
          <Diagram />
        </Left>
        <ModelExplorer />
        <SideDock />
      </Body>
      <StatusBar>
        <StatusCell $width={68} />
        <StatusCell $width={98} />
        <StatusCell>[Project]</StatusCell>
        <Svg width='15' height='19' viewBox='0 0 15 19'>
          <path d='M4 18L15 7M8 18l7-7M12 18l3-3' stroke='#909090' strokeWidth='2' />
        </Svg>
      </StatusBar>
    </Window>
  )
}
